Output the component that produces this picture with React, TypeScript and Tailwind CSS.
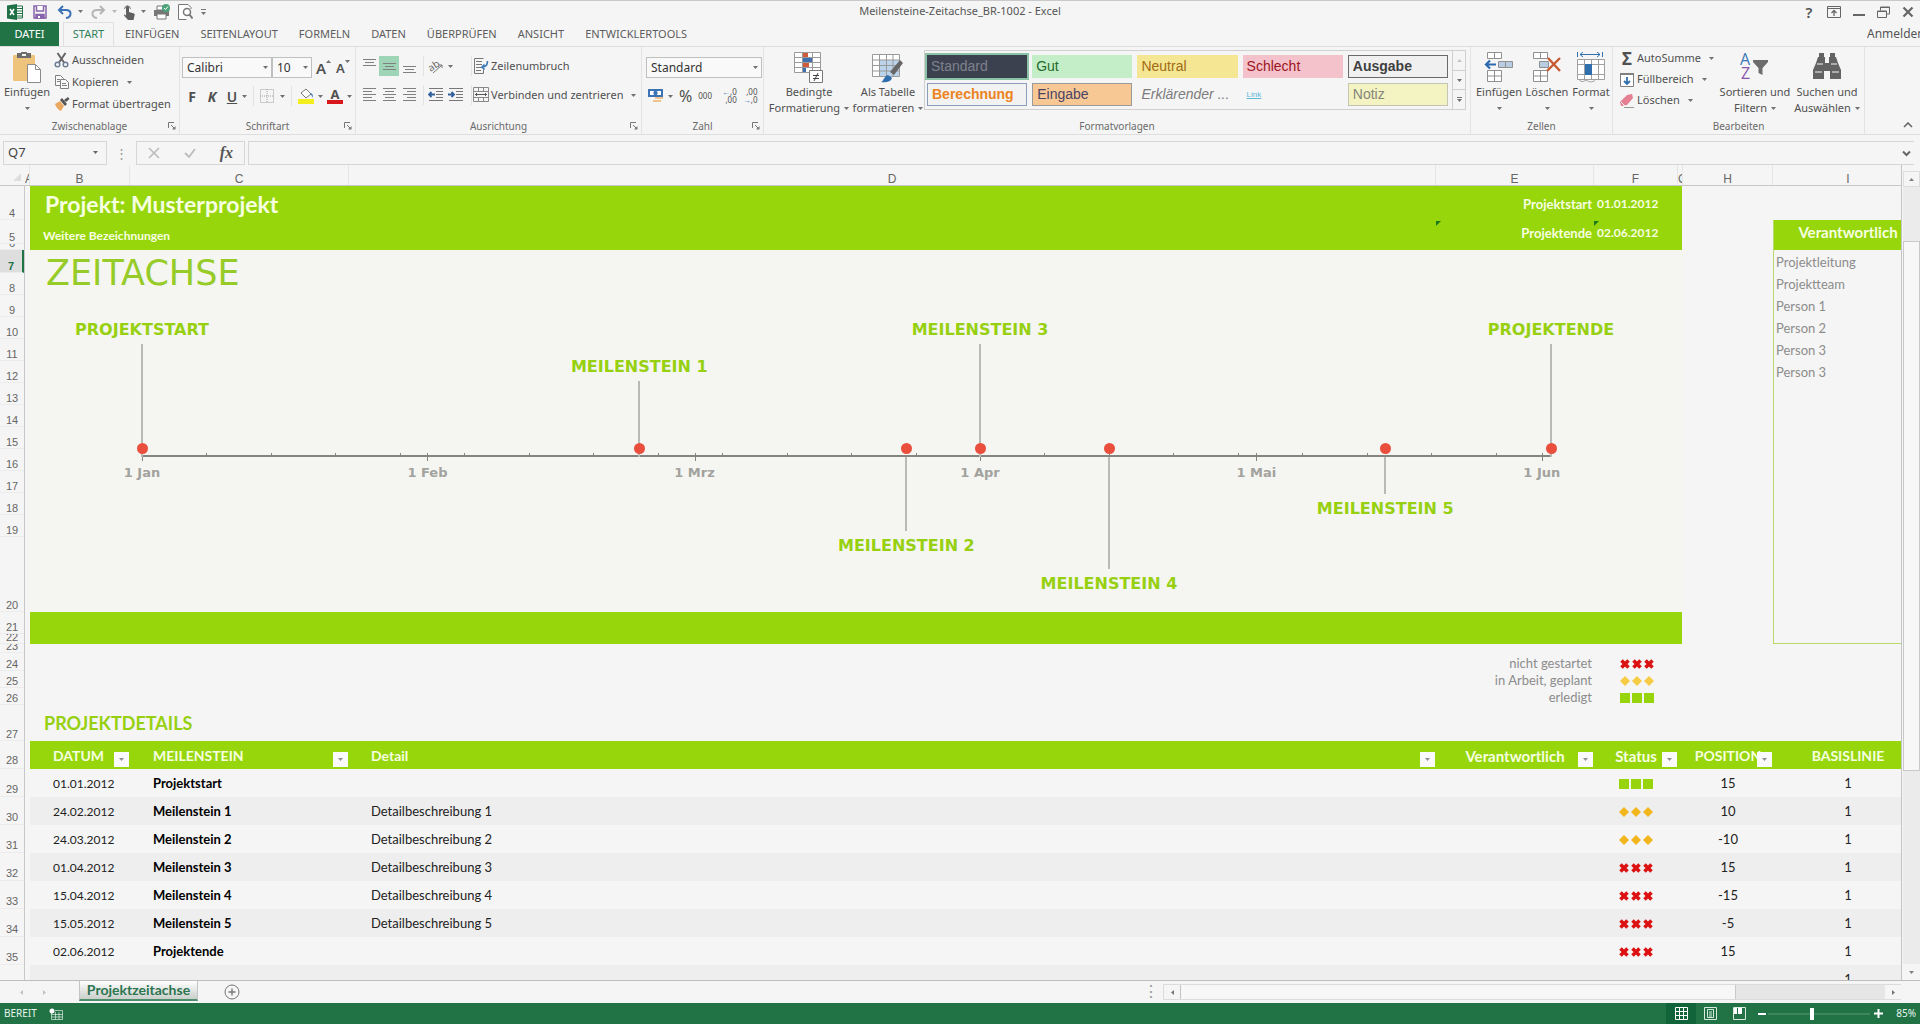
import React from "react";
import clsx from "clsx";

const rowHeaders = [
  { n: 4, h: "h-[34px]" },
  { n: 5, h: "h-6" },
  { n: 6, h: "h-1.5" },
  { n: 7, h: "h-[23px]" },
  { n: 8, h: "h-[22px]" },
  { n: 9, h: "h-[22px]" },
  { n: 10, h: "h-[22px]" },
  { n: 11, h: "h-[22px]" },
  { n: 12, h: "h-[22px]" },
  { n: 13, h: "h-[22px]" },
  { n: 14, h: "h-[22px]" },
  { n: 15, h: "h-[22px]" },
  { n: 16, h: "h-[22px]" },
  { n: 17, h: "h-[22px]" },
  { n: 18, h: "h-[22px]" },
  { n: 19, h: "h-[22px]" },
  { n: 20, h: "h-[75px]" },
  { n: 21, h: "h-[22px]" },
  { n: 22, h: "h-2.5" },
  { n: 23, h: "h-[9px]" },
  { n: 24, h: "h-[18px]" },
  { n: 25, h: "h-[17px]" },
  { n: 26, h: "h-[17px]" },
  { n: 27, h: "h-9" },
  { n: 28, h: "h-7 pb-0.5" },
  { n: 29, h: "h-7 pb-px" },
  { n: 30, h: "h-7 pb-px" },
  { n: 31, h: "h-7 pb-px" },
  { n: 32, h: "h-7 pb-px" },
  { n: 33, h: "h-7 pb-px" },
  { n: 34, h: "h-7 pb-px" },
  { n: 35, h: "h-7 pb-px" },
];

type Status = "done" | "active" | "open";

const milestones: { date: string; name: string; detail: string; status: Status; position: number }[] = [
  { date: "01.01.2012", name: "Projektstart", detail: "", status: "done", position: 15 },
  { date: "24.02.2012", name: "Meilenstein 1", detail: "Detailbeschreibung 1", status: "active", position: 10 },
  { date: "24.03.2012", name: "Meilenstein 2", detail: "Detailbeschreibung 2", status: "active", position: -10 },
  { date: "01.04.2012", name: "Meilenstein 3", detail: "Detailbeschreibung 3", status: "open", position: 15 },
  { date: "15.04.2012", name: "Meilenstein 4", detail: "Detailbeschreibung 4", status: "open", position: -15 },
  { date: "15.05.2012", name: "Meilenstein 5", detail: "Detailbeschreibung 5", status: "open", position: -5 },
  { date: "02.06.2012", name: "Projektende", detail: "", status: "open", position: 15 },
];

const months = [
  { label: "1 Jan", day: 0 },
  { label: "1 Feb", day: 31 },
  { label: "1 Mrz", day: 60 },
  { label: "1 Apr", day: 91 },
  { label: "1 Mai", day: 121 },
  { label: "1 Jun", day: 152 },
];

const TOTAL_DAYS = 153;
const percent = (day: number) => `${(day / TOTAL_DAYS) * 100}%`;

const dayOf = (date: string) => {
  const [d, m, y] = date.split(".").map(Number);
  return Math.round((Date.UTC(y, m - 1, d) - Date.UTC(2012, 0, 1)) / 86400000);
};

const people = ["Projektleitung", "Projektteam", "Person 1", "Person 2", "Person 3", "Person 3"];

/* ---------- small parts ---------- */

const Caret = ({ className }: { className?: string }) => (
  <svg viewBox="0 0 5 3" className={clsx("w-[5px] h-[3px] shrink-0 opacity-80", className)} fill="currentColor">
    <path d="M0 0h5L2.5 3z" />
  </svg>
);

const Sep = () => <span className="w-px h-5 bg-[#e2e2e2]" />;

const Launcher = () => (
  <button type="button" aria-label="Dialogfeld öffnen" className="absolute right-[3px] bottom-1">
    <svg viewBox="0 0 8 8" className="w-2 h-2" fill="none" stroke="#777">
      <path d="M.5 6V.5H6M3 3l3 3" />
      <path d="M7.5 4v3.5H4z" fill="#777" stroke="none" />
    </svg>
  </button>
);

interface GroupProps {
  label: string;
  className: string;
  launcher?: boolean;
  children: React.ReactNode;
}

const Group = ({ label, className, launcher, children }: GroupProps) => (
  <section className={clsx("relative flex flex-col border-r border-[#e3e3e3] shrink-0", className)}>
    <div className="h-[71px] flex">{children}</div>
    <div className="text-center text-[10px] leading-4 text-[#6a6a6a]">{label}</div>
    {launcher && <Launcher />}
  </section>
);

interface BigButtonProps {
  icon: React.ReactNode;
  line1: string;
  line2?: string;
  className: string;
}

const BigButton = ({ icon, line1, line2, className }: BigButtonProps) => (
  <button type="button" className={clsx("flex flex-col items-center pt-[5px] leading-4 whitespace-nowrap shrink-0", className)}>
    <span className="h-8">{icon}</span>
    <span>{line1}</span>
    <span className="h-4 flex items-center gap-1">
      {line2}
      <Caret />
    </span>
  </button>
);

const SmallButton = ({ icon, label, caret }: { icon: React.ReactNode; label: string; caret?: boolean }) => (
  <button type="button" className="flex items-center gap-0.5 whitespace-nowrap">
    <span className="w-4 h-4 shrink-0">{icon}</span>
    <span>{label}</span>
    {caret && <Caret className="ml-1.5" />}
  </button>
);

const Combo = ({ label, value, className }: { label: string; value: string; className: string }) => (
  <label className={clsx("relative block h-[21px]", className)}>
    <span className="sr-only">{label}</span>
    <select className="appearance-none w-full h-full border border-[#c0c0c0] bg-[#f9f9f9] pl-1 text-[12px] leading-4 text-[#333]">
      <option>{value}</option>
    </select>
    <Caret className="absolute right-1 top-[9px]" />
  </label>
);

const lineSets = {
  top: [[1, 14, 1], [3, 12, 4], [1, 14, 7]],
  middle: [[1, 14, 5], [3, 12, 8], [1, 14, 11]],
  bottom: [[1, 14, 8], [3, 12, 11], [1, 14, 14]],
  left: [[1, 14, 1], [1, 10, 4], [1, 14, 7], [1, 10, 10], [1, 14, 13]],
  center: [[1, 14, 1], [3, 12, 4], [1, 14, 7], [3, 12, 10], [1, 14, 13]],
  right: [[1, 14, 1], [5, 14, 4], [1, 14, 7], [5, 14, 10], [1, 14, 13]],
};

const AlignButton = ({ kind, label, active }: { kind: keyof typeof lineSets; label: string; active?: boolean }) => (
  <button type="button" aria-label={label} className={clsx("w-5 h-5 flex items-center justify-center", active && "bg-[#9fd5b7]")}>
    <svg viewBox="0 0 15 15" className="w-[15px] h-[15px]" stroke="#808080">
      {lineSets[kind].map(([a, b, y]) => (
        <path key={y} d={`M${a} ${y - 0.5}H${b}`} />
      ))}
    </svg>
  </button>
);

const StatusMark = ({ status, pale }: { status: Status; pale?: boolean }) => (
  <svg viewBox="0 0 34 10" className="w-[34px] h-2.5 mx-auto" aria-label={status}>
    {[0, 12, 24].map((x) => {
      if (status === "done") return <rect key={x} x={x} y="0" width="10" height="10" fill="#97d40c" />;
      if (status === "active")
        return <path key={x} d={`M${x + 5} 0l5 5-5 5-5-5z`} fill={pale ? "#f6cc45" : "#f2b51c"} />;
      return <path key={x} d={`M${x + 1.5} 1.500l7 7M${x + 8.5} 1.500l-7 7`} stroke="#dc1212" strokeWidth="3.600" />;
    })}
  </svg>
);

/* ---------- ribbon icons ---------- */

const PasteIcon = () => (
  <svg viewBox="0 0 28 32" className="w-7 h-8">
    <rect x="0" y="3" width="22" height="26" rx="1" fill="#eec37c" />
    <path d="M4 1h4a3 3 0 016 0h4v5H4z" fill="#6d6d6d" />
    <path d="M9 2h4v2H9z" fill="#f5f5f5" />
    <path d="M14.500 12.500h8l5 5v13h-13z" fill="#fff" stroke="#8a8a8a" />
    <path d="M22.500 12.500v5h5" fill="none" stroke="#8a8a8a" />
  </svg>
);

const CutIcon = () => (
  <svg viewBox="0 0 16 16" className="w-4 h-4" fill="none" stroke="#666" strokeWidth="1.5">
    <path d="M3.500 1l6.500 9.500M11.500 1L5 10.500" strokeWidth="2" />
    <circle cx="3.500" cy="12.500" r="2.300" stroke="#6c7f96" />
    <circle cx="11.500" cy="12.500" r="2.300" stroke="#6c7f96" />
  </svg>
);

const CopyIcon = () => (
  <svg viewBox="0 0 16 16" className="w-4 h-4" fill="#fafafa" stroke="#808080">
    <path d="M1.500 1.500h5l3 3v7h-8z" />
    <path d="M3 5.500h3M3 7.500h3" />
    <path d="M6.500 5.500h5l3 3v6h-8z" />
    <path d="M8 9.500h4M8 11.500h5" />
  </svg>
);

const BrushIcon = () => (
  <svg viewBox="0 0 16 16" className="w-4 h-4">
    <path d="M1 8l5-3 4 5-3 5c-3-1-5-4-6-7z" fill="#eba860" />
    <path d="M6 4l5 6 2-2-5-6z" fill="#555" />
    <path d="M10 4l4-3 1.500 2L12 6z" fill="#555" />
  </svg>
);

const RotateIcon = () => (
  <svg viewBox="0 0 16 16" className="w-4 h-4">
    <text x="0" y="11" fontSize="10" fill="#666" transform="rotate(-35 6 8)">ab</text>
    <path d="M5 15l9-8M14 7h-3M14 7v3" stroke="#777" fill="none" />
  </svg>
);

const WrapIcon = () => (
  <svg viewBox="0 0 16 16" className="w-4 h-4" fill="none">
    <path d="M1.500.5h9M1.500.5v15h9v-4M3 3.500h6M3 6.500h6M3 9.500h6M3 12.500h5" stroke="#777" />
    <path d="M14.500 3c0 4-2 6-5 6M11.500 6.500L9 9l2.500 2.500" stroke="#3b7ab8" strokeWidth="1.6" />
  </svg>
);

const MergeIcon = () => (
  <svg viewBox="0 0 16 16" className="w-4 h-4" fill="none" stroke="#888">
    <path d="M.5.5h15v14H.5zM.5 4.500h15M.5 10.500h15M5.500.5v4M10.500.5v4M5.500 10.500v4M10.500 10.500v4" />
    <path d="M2 7.500h12M4 6L2.500 7.500 4 9M12 6l1.500 1.500L12 9" stroke="#555" />
  </svg>
);

const IndentIcon = ({ right }: { right?: boolean }) => (
  <svg viewBox="0 0 16 16" className="w-4 h-4" fill="none" stroke="#777">
    <path d="M1 1.500h14M8 4.500h7M8 7.500h7M8 10.500h7M1 13.500h14" />
    <path d={right ? "M0 7.500h6M3.500 5L6 7.500 3.500 10" : "M1 7.500h6M3.500 5L1 7.500 3.500 10"} stroke="#31619c" strokeWidth="1.8" />
  </svg>
);

const CurrencyIcon = () => (
  <svg viewBox="0 0 16 16" className="w-4 h-4">
    <rect x="0" y="1" width="15" height="8" fill="#3b73b4" />
    <path d="M2 3h11v4H2z" fill="#fff" />
    <circle cx="7.500" cy="5" r="2.200" fill="#3b73b4" />
    <path d="M7 9h8v2H7zM5 12h8v2H5z" fill="#f0c38c" />
  </svg>
);

const CondIcon = () => (
  <svg viewBox="0 0 30 32" className="w-[30px] h-8">
    <path d="M.5.5h26v20H.5zM.5 5.500h26M.5 10.500h26M.5 15.500h26M8.500.5v20M18.500.5v20" fill="#fff" stroke="#9a9a9a" />
    <path d="M9 1h5v4H9zM9 11h6v4H9z" fill="#cf5b3d" />
    <path d="M9 6h9v4H9zM9 16h3v4H9z" fill="#3f6fae" />
    <path d="M15.500 18.500h13v12h-13z" fill="#fff" stroke="#777" />
    <path d="M19 23.500h6M19 26.500h6M24 21l-4 8" stroke="#444" />
  </svg>
);

const TableFormatIcon = () => (
  <svg viewBox="0 0 32 32" className="w-8 h-8">
    <path d="M.5 2.500h27v22H.5z" fill="#fff" />
    <path d="M8 8h19v16H8z" fill="#bcd3ec" />
    <path d="M.5 2.500h27v22H.5zM.5 8h27M.5 13.500h27M.5 19h27M7.500 2.500v22M14.500 2.500v22M21 2.500v22" fill="none" stroke="#999" />
    <path d="M28 8l3 3-9 12-4-3z" fill="#666" />
    <path d="M9 30c3-1 3-6 7-7l4 3c-1 4-7 5-11 4z" fill="#2f6fae" />
  </svg>
);

const CellsInsertIcon = () => (
  <svg viewBox="0 0 30 32" className="w-[30px] h-8" fill="#fff" stroke="#909090">
    <path d="M3.500.5h14v6h-14zM10.500.5v6M3.500 18.500h14v11h-14zM10.500 18.500v11M3.500 24h14" />
    <path d="M14.500 9.500h14v6h-14zM21.500 9.500v6" fill="#b9cde2" />
    <path d="M12 12.500H2M6 8.500l-4 4 4 4" fill="none" stroke="#2b6cb0" strokeWidth="2.200" />
  </svg>
);

const CellsDeleteIcon = () => (
  <svg viewBox="0 0 30 32" className="w-[30px] h-8" fill="#fff" stroke="#909090">
    <path d="M1.500.5h14v6h-14zM8.500.5v6M1.500 18.500h14v11h-14zM8.500 18.500v11M1.500 24h14" />
    <path d="M7.500 9.500h9v6h-9z" fill="#b9cde2" />
    <path d="M16 6l12 13M28 6L15 19" fill="none" stroke="#c75a33" strokeWidth="2.400" />
  </svg>
);

const CellsFormatIcon = () => (
  <svg viewBox="0 0 30 32" className="w-[30px] h-8" fill="#fff" stroke="#a0a0a0">
    <path d="M1.500 7.500h27v20h-27zM1.500 12.500h27M1.500 22.500h27M8.500 7.500v20M15.500 7.500v20M22.500 7.500v20" />
    <path d="M9 12h7v11H9z" fill="#2f6fae" stroke="none" />
    <path d="M4 2.500h20M7 0L4 2.500 7 5M21 0l3 2.500L21 5M1.500 0v5M26.500 0v5" fill="none" stroke="#2f6fae" />
    <path d="M3 27.500c3 4 5 1 7 1s4 3 9 0" fill="none" />
  </svg>
);

const SortIcon = () => (
  <svg viewBox="0 0 30 32" className="w-[30px] h-8">
    <text x="0" y="13" fontSize="16" fill="#3c78b4" className="font-['Open_Sans',sans-serif]">A</text>
    <text x="1" y="27" fontSize="16" fill="#8d55ad" className="font-['Open_Sans',sans-serif]">Z</text>
    <path d="M13 8h15v2l-5.500 6v7l-4-2v-5L13 10z" fill="#6d6d6d" />
  </svg>
);

const BinocularsIcon = () => (
  <svg viewBox="0 0 28 32" className="w-7 h-8" fill="#636363">
    <path d="M6 1h5v4h1v6h4V5h1V1h5v4h1l2 6 3 7v9H17v-8h-6v8H0v-9l3-7 2-6h1z" />
    <path d="M4 12h6M18 12h6M2 20h7M19 20h7" stroke="#f5f5f5" fill="none" />
  </svg>
);

const FillIcon = () => (
  <svg viewBox="0 0 16 16" className="w-4 h-4" fill="none">
    <path d="M1.500 2.500h13v12h-13z" fill="#fff" stroke="#808080" />
    <path d="M1 2h14" stroke="#808080" strokeWidth="2" />
    <path d="M8 5v7M5 9l3 3 3-3" stroke="#2f6fae" strokeWidth="1.800" />
  </svg>
);

const EraserIcon = () => (
  <svg viewBox="0 0 16 16" className="w-4 h-4">
    <path d="M8 2l5-1 1 4-6 7-6 1-1-4z" fill="#e57f92" />
    <path d="M2 9l4 4" stroke="#f5f5f5" />
    <path d="M5 14.500h10" stroke="#999" />
  </svg>
);

/* ---------- window chrome ---------- */

const TitleBar = () => (
  <header className="grid grid-cols-[1fr_auto_1fr] items-center h-[21px] text-[#555]">
    <div className="flex items-center pl-[7px]">
      <svg viewBox="0 0 16 16" className="w-4 h-4" aria-label="Excel">
        <path d="M8 2h7.500v12H8z" fill="#fff" stroke="#217346" />
        <path d="M9 4.500h6M9 7h6M9 9.500h6M9 12h6" stroke="#217346" />
        <path d="M0 1.500L10 0v16L0 14.500z" fill="#1f7145" />
        <path d="M3 5l4 6M7 5l-4 6" stroke="#fff" strokeWidth="1.500" />
      </svg>
      <button type="button" aria-label="Speichern" className="ml-2.5">
        <svg viewBox="0 0 14 14" className="w-3.5 h-3.5" fill="none" stroke="#8764ab" strokeWidth="1.500">
          <path d="M1 1h12v12H1z" />
          <path d="M3.500 1v5h7V1" fill="#fff" />
          <path d="M3 9.500h8V13H3z" fill="#8764ab" />
          <path d="M5 11h2v2H5z" fill="#fff" stroke="none" />
        </svg>
      </button>
      <button type="button" aria-label="Rückgängig" className="ml-2.5 flex items-center gap-1.5">
        <svg viewBox="0 0 15 14" className="w-[15px] h-3.5" fill="none" stroke="#3a72b4" strokeWidth="2">
          <path d="M6 1L2 5l4 4M2 5h7c6 0 6 7 0 8" />
        </svg>
        <Caret />
      </button>
      <button type="button" aria-label="Wiederholen" className="ml-2 flex items-center gap-1.5 text-[#aaa]">
        <svg viewBox="0 0 15 14" className="w-[15px] h-3.5" fill="none" stroke="#b5b5b5" strokeWidth="2">
          <path d="M9 1l4 4-4 4M13 5H6C0 5 0 12 6 13" />
        </svg>
        <Caret />
      </button>
      <button type="button" aria-label="Touchmodus" className="ml-1.5 flex items-center gap-1.5">
        <svg viewBox="0 0 12 16" className="w-3 h-4" fill="#606060">
          <path d="M3 3a1.500 1.500 0 013 0v5l5 1.500c1 .5 1 1 .5 2L10.500 16H5L1 11.500c-.5-1 .5-1.500 1.500-.5L3 12z" />
          <path d="M1.500 5a3 3 0 116 0" fill="none" stroke="#777" />
        </svg>
        <Caret />
      </button>
      <button type="button" aria-label="Schnelldruck" className="ml-2">
        <svg viewBox="0 0 16 16" className="w-4 h-4">
          <path d="M0 6h15v6H0z" fill="#777" />
          <path d="M3 10h9v5H3z" fill="#fff" stroke="#777" />
          <path d="M3 2h6v4H3z" fill="#fff" stroke="#777" />
          <circle cx="12" cy="4" r="4" fill="#4da37b" />
          <path d="M10 4l1.500 1.500L14 2.500" fill="none" stroke="#fff" />
        </svg>
      </button>
      <button type="button" aria-label="Seitenansicht" className="ml-2">
        <svg viewBox="0 0 15 16" className="w-[15px] h-4" fill="none" stroke="#777">
          <path d="M13 5V3.500L10 .5H.5v15h8" fill="#fff" />
          <circle cx="9" cy="8" r="3.500" strokeWidth="1.500" />
          <path d="M11.500 10.500l3 4" strokeWidth="2" />
        </svg>
      </button>
      <button type="button" aria-label="Symbolleiste anpassen" className="ml-2 flex flex-col items-center gap-0.5">
        <span className="w-[5px] h-px bg-[#777]" />
        <Caret />
      </button>
    </div>
    <h1 className="text-[11px]">Meilensteine-Zeitachse_BR-1002 - Excel</h1>
    <div className="flex items-center justify-end gap-3 pr-1.5">
      <button type="button" aria-label="Hilfe" className="w-3 text-[15px] leading-5 font-semibold">?</button>
      <button type="button" aria-label="Menüband-Anzeigeoptionen">
        <svg viewBox="0 0 14 12" className="w-3.5 h-3" fill="none" stroke="#666">
          <path d="M.5.5h13v11H.5zM.5 2.500h13" />
          <path d="M7 10V5M4.500 7L7 4.500 9.500 7" strokeWidth="1.300" />
        </svg>
      </button>
      <button type="button" aria-label="Minimieren" className="w-3 h-0.5 mt-1.5 bg-[#666]" />
      <button type="button" aria-label="Verkleinern">
        <svg viewBox="0 0 13 12" className="w-[13px] h-3" fill="none" stroke="#666">
          <path d="M.5 5h9v6.500h-9zM.5 5.500h9M3.500 4.500V1h9v7H10M3.500 1.500h9" />
        </svg>
      </button>
      <button type="button" aria-label="Schließen">
        <svg viewBox="0 0 12 12" className="w-3 h-3" stroke="#666" strokeWidth="2.200">
          <path d="M1.500 1.500l9 9M10.500 1.500l-9 9" />
        </svg>
      </button>
    </div>
  </header>
);

const tabs = ["EINFÜGEN", "SEITENLAYOUT", "FORMELN", "DATEN", "ÜBERPRÜFEN", "ANSICHT", "ENTWICKLERTOOLS"];

const TabStrip = () => (
  <nav className="flex gap-px h-6 items-stretch text-[11px] text-[#5c5c5c]">
    <button type="button" className="w-[59px] bg-[#217346] text-white">DATEI</button>
    <button type="button" className="ml-[3px] w-[51px] border border-b-0 border-[#e0e0e0] text-[#2f8259]">START</button>
    {tabs.map((t) => (
      <button type="button" key={t} className="px-2.5">{t}</button>
    ))}
    <a href="#" className="ml-auto w-[53px] overflow-hidden flex items-center text-[12px] text-[#555]">Anmelden</a>
  </nav>
);

const cellStyles = [
  { name: "Standard", cls: "bg-[#3c4150] text-[#7e828c] outline-2 outline-[#8cc3a7]" },
  { name: "Gut", cls: "bg-[#c4eec8] text-[#1f6b2a]" },
  { name: "Neutral", cls: "bg-[#f5e693] text-[#a06b14]" },
  { name: "Schlecht", cls: "bg-[#f3c2ca] text-[#9d1422]" },
  { name: "Ausgabe", cls: "bg-[#f0f0f0] text-[#3f3f3f] font-bold border border-[#6a6a6a]" },
  { name: "Berechnung", cls: "bg-[#f2f2f2] text-[#ec8320] font-bold border border-[#8b9dba]" },
  { name: "Eingabe", cls: "bg-[#f7c894] text-[#4b4465] border border-[#9a9a9a]" },
  { name: "Erklärender ...", cls: "text-[#7c7c7c] italic" },
  { name: "Link", cls: "text-[#5cb8d8] underline text-[8px]" },
  { name: "Notiz", cls: "bg-[#f3f4c2] text-[#85857a] border border-[#c4c4b4]" },
];

const Ribbon = () => (
  <div className="flex h-[89px] border-y border-[#dedede] text-[11px] text-[#505050]">
    <Group label="Zwischenablage" className="w-[180px]" launcher>
      <BigButton icon={<PasteIcon />} line1="Einfügen" className="w-[54px]" />
      <div className="flex flex-col pt-0.5">
        <div className="h-[22px] flex"><SmallButton icon={<CutIcon />} label="Ausschneiden" /></div>
        <div className="h-[22px] flex"><SmallButton icon={<CopyIcon />} label="Kopieren" caret /></div>
        <div className="h-[22px] flex"><SmallButton icon={<BrushIcon />} label="Format übertragen" /></div>
      </div>
    </Group>

    <Group label="Schriftart" className="w-44" launcher>
      <div className="flex flex-col gap-2 pt-2.5 pl-0.5">
        <div className="flex items-center h-[21px]">
          <Combo label="Schriftart" value="Calibri" className="w-[90px]" />
          <Combo label="Schriftgrad" value="10" className="w-10" />
          <button type="button" aria-label="Schriftgrad vergrößern" className="ml-1 w-5 flex items-start text-[15px] leading-4 font-semibold">
            A<Caret className="rotate-180" />
          </button>
          <button type="button" aria-label="Schriftgrad verkleinern" className="w-4 flex items-start text-[13px] leading-4 font-semibold">
            A<Caret />
          </button>
        </div>
        <div className="flex items-center h-5 text-[14px]">
          <button type="button" className="w-5 font-bold">F</button>
          <button type="button" className="w-5 font-bold italic">K</button>
          <button type="button" className="w-5 font-semibold underline">U</button>
          <Caret className="mr-1.5" />
          <Sep />
          <button type="button" aria-label="Rahmen" className="flex items-center gap-1.5 mx-1.5">
            <svg viewBox="0 0 14 14" className="w-3.5 h-3.5" fill="none" stroke="#a0a0a0" strokeDasharray="1 1">
              <path d="M.5.5h13v13H.5zM7 0v14M0 7h14" />
            </svg>
            <Caret />
          </button>
          <Sep />
          <button type="button" aria-label="Füllfarbe" className="flex items-center gap-1 ml-1.5">
            <svg viewBox="0 0 16 16" className="w-4 h-4">
              <path d="M3 5l5-4 5 5-5 4z" fill="#fff" stroke="#777" />
              <path d="M12 5c3 0 3 3 3 5-1-1-1-3-3-4z" fill="#4a7cb8" />
              <path d="M0 11h16v5H0z" fill="#f3ee1e" />
            </svg>
            <Caret />
          </button>
          <button type="button" aria-label="Schriftfarbe" className="flex items-center gap-1 ml-1">
            <span className="w-4 h-4 border-b-4 border-[#d8161c] text-[13px] leading-3 font-bold">A</span>
            <Caret />
          </button>
        </div>
      </div>
    </Group>

    <Group label="Ausrichtung" className="w-[286px]" launcher>
      <div className="flex flex-col gap-2 pt-[9px] pl-[3px]">
        <div className="flex items-center h-5">
          <AlignButton kind="top" label="Oben ausrichten" />
          <AlignButton kind="middle" label="Zentriert ausrichten" active />
          <AlignButton kind="bottom" label="Unten ausrichten" />
          <span className="w-1" />
          <Sep />
          <button type="button" aria-label="Ausrichtung" className="flex items-center gap-1 ml-1 mr-[18px]">
            <RotateIcon />
            <Caret />
          </button>
          <Sep />
          <span className="w-px" />
          <SmallButton icon={<WrapIcon />} label="Zeilenumbruch" />
        </div>
        <div className="flex items-center h-5 mt-px">
          <AlignButton kind="left" label="Linksbündig" />
          <AlignButton kind="center" label="Zentriert" />
          <AlignButton kind="right" label="Rechtsbündig" />
          <span className="w-1" />
          <Sep />
          <button type="button" aria-label="Einzug verkleinern" className="ml-1"><IndentIcon /></button>
          <button type="button" aria-label="Einzug vergrößern" className="ml-1 mr-[7px]"><IndentIcon right /></button>
          <Sep />
          <span className="w-px" />
          <SmallButton icon={<MergeIcon />} label="Verbinden und zentrieren" caret />
        </div>
      </div>
    </Group>

    <Group label="Zahl" className="w-[122px]" launcher>
      <div className="flex flex-col gap-2 pt-2.5 pl-1">
        <Combo label="Zahlenformat" value="Standard" className="w-[116px]" />
        <div className="flex items-center h-5">
          <button type="button" aria-label="Buchhaltungszahlenformat" className="flex items-center gap-1 ml-0.5">
            <CurrencyIcon />
            <Caret />
          </button>
          <button type="button" className="ml-1.5 text-[16px]">%</button>
          <button type="button" className="ml-1.5 text-[8px]">000</button>
          <button type="button" aria-label="Dezimalstelle hinzufügen" className="ml-2.5 text-[8px] leading-2 text-right">
            <span className="text-[#2f6fae]">←</span>,0<br />,00
          </button>
          <button type="button" aria-label="Dezimalstelle löschen" className="ml-1.5 text-[8px] leading-2 text-right">
            ,00<br /><span className="text-[#2f6fae]">→</span>,0
          </button>
        </div>
      </div>
    </Group>

    <Group label="Formatvorlagen" className="flex-1">
      <BigButton icon={<CondIcon />} line1="Bedingte" line2="Formatierung" className="w-[90px]" />
      <BigButton icon={<TableFormatIcon />} line1="Als Tabelle" line2="formatieren" className="w-[68px]" />
      <div className="flex-1 flex mt-[3px] ml-0.5 mr-1 h-[60px] border border-[#d0d0d0]">
        <div className="flex-1 grid grid-cols-5 gap-[5px] py-1 px-0.5 font-['Liberation_Sans',Arial,sans-serif] text-[14px]">
          {cellStyles.map((s) => (
            <button type="button" key={s.name} className={clsx("h-[23px] px-1 text-left whitespace-nowrap", s.cls)}>
              {s.name}
            </button>
          ))}
        </div>
        <div className="w-[13px] ml-0.5 flex flex-col border-l border-[#d0d0d0] divide-y divide-[#d0d0d0]">
          <button type="button" aria-label="Nach oben" className="flex-1 flex items-center justify-center text-[#bbb]"><Caret className="rotate-180" /></button>
          <button type="button" aria-label="Nach unten" className="flex-1 flex items-center justify-center"><Caret /></button>
          <button type="button" aria-label="Mehr" className="flex-1 flex flex-col gap-px items-center justify-center">
            <span className="w-[5px] h-px bg-[#777]" />
            <Caret />
          </button>
        </div>
      </div>
    </Group>

    <Group label="Zellen" className="w-[142px]">
      <BigButton icon={<CellsInsertIcon />} line1="Einfügen" className="w-[50px] ml-[3px]" />
      <BigButton icon={<CellsDeleteIcon />} line1="Löschen" className="w-[46px]" />
      <BigButton icon={<CellsFormatIcon />} line1="Format" className="w-[42px]" />
    </Group>

    <Group label="Bearbeiten" className="w-[252px]">
      <div className="flex flex-col pt-px pl-1.5 w-[105px]">
        <div className="h-[21px] flex"><SmallButton icon={<span className="block text-[17px] leading-4 font-bold">Σ</span>} label="AutoSumme" caret /></div>
        <div className="h-[21px] flex"><SmallButton icon={<FillIcon />} label="Füllbereich" caret /></div>
        <div className="h-[21px] flex"><SmallButton icon={<EraserIcon />} label="Löschen" caret /></div>
      </div>
      <BigButton icon={<SortIcon />} line1="Sortieren und" line2="Filtern" className="w-[74px]" />
      <BigButton icon={<BinocularsIcon />} line1="Suchen und" line2="Auswählen" className="w-[70px]" />
    </Group>

    <div className="w-[55px] flex items-end justify-end pr-[7px] pb-1.5 shrink-0">
      <button type="button" aria-label="Menüband reduzieren">
        <svg viewBox="0 0 10 6" className="w-2.5 h-1.5" fill="none" stroke="#666" strokeWidth="1.600">
          <path d="M1 5l4-4 4 4" />
        </svg>
      </button>
    </div>
  </div>
);

const FormulaBar = () => (
  <div className="flex items-stretch h-[24px] mt-1.5 ml-[3px] mr-1.5 text-[13px] text-[#444]">
    <label className="relative w-[104px] border border-[#d6d6d6] flex">
      <span className="sr-only">Namenfeld</span>
      <input defaultValue="Q7" className="w-full pl-1 bg-transparent" />
      <Caret className="absolute right-2 top-[9px]" />
    </label>
    <span className="w-[29px] flex items-center justify-center text-[#999] leading-none">⋮</span>
    <div className="w-[109px] border border-[#d6d6d6] flex items-center justify-between px-[11px]">
      <button type="button" aria-label="Abbrechen">
        <svg viewBox="0 0 12 12" className="w-3 h-3" stroke="#bbb" strokeWidth="1.600"><path d="M1 1l10 10M11 1L1 11" /></svg>
      </button>
      <button type="button" aria-label="Eingeben">
        <svg viewBox="0 0 12 12" className="w-3 h-3" stroke="#bbb" strokeWidth="1.800" fill="none"><path d="M1 6l4 4 6-8" /></svg>
      </button>
      <button type="button" className="font-['Liberation_Serif',serif] italic text-[16px] leading-5 font-bold text-[#555]">fx</button>
    </div>
    <input aria-label="Bearbeitungsleiste" className="flex-1 ml-[3px] border border-r-0 border-[#d6d6d6] bg-transparent" />
    <button type="button" aria-label="Erweitern" className="w-4 border-y border-[#d6d6d6] flex items-center justify-center">
      <svg viewBox="0 0 9 7" className="w-[9px] h-[7px]" fill="none" stroke="#666" strokeWidth="2"><path d="M1 1.500l3.500 3.500L8 1.500" /></svg>
    </button>
  </div>
);

/* ---------- sheet ---------- */

const columnHeads = [
  { l: "A", w: "w-[5px]" },
  { l: "B", w: "w-[100px] justify-center" },
  { l: "C", w: "w-[219px] justify-center" },
  { l: "D", w: "flex-1 justify-center" },
  { l: "E", w: "w-[158px] justify-center" },
  { l: "F", w: "w-[84px] justify-center" },
  { l: "G", w: "w-[5px]" },
  { l: "H", w: "w-[90px] justify-center" },
];

const ColumnHeads = () => (
  <div className="flex h-[21px] border-b border-[#c8c8c8] font-['Liberation_Sans',Arial,sans-serif] text-[12px] leading-7 text-[#666]">
    <span className="w-[25px] flex items-end justify-end p-1">
      <svg viewBox="0 0 8 8" className="w-2 h-2" fill="#ddd"><path d="M8 0v8H0z" /></svg>
    </span>
    {columnHeads.map((c) => (
      <span key={c.l} className={clsx("flex overflow-hidden border-r border-[#e6e6e6]", c.w)}>{c.l}</span>
    ))}
    <span className="w-[128px] overflow-hidden"><span className="block w-[150px] text-center">I</span></span>
  </div>
);

const RowHeads = () => (
  <div className="w-[25px] shrink-0 border-r border-[#c8c8c8] font-['Liberation_Sans',Arial,sans-serif] text-[11px] leading-[11px] text-[#666]">
    {rowHeaders.map((r) => (
      <div
        key={r.n}
        className={clsx(
          "flex items-end justify-center overflow-hidden border-b border-[#ececec]",
          r.h,
          r.n === 7 && "bg-[#dedede] font-bold text-[#217346] border-r-2 border-r-[#217346]"
        )}
      >
        {r.n}
      </div>
    ))}
  </div>
);

const Timeline = () => (
  <div className="h-[362px] bg-[#f5f6f1] pt-1 pl-4">
    <h2 className="font-['DejaVu_Sans',Verdana,sans-serif] text-[35px] leading-[38px] text-[#97cc28]">ZEITACHSE</h2>
    {/* axis starts on 1 Jan and ends on the last milestone */}
    <div className="relative ml-24 mr-[131px] mt-[163px] border-t-2 border-[#85857f] font-['DejaVu_Sans',Verdana,sans-serif] font-bold">
      {Array.from({ length: 22 }, (_, i) => (
        <span key={i} className="absolute -top-1 w-px h-1 bg-[#85857f]" style={{ left: percent(i * 7) }} />
      ))}
      {months.map((m) => (
        <React.Fragment key={m.label}>
          <span className="absolute -top-1 w-px h-2 bg-[#85857f]" style={{ left: percent(m.day) }} />
          <span className="absolute top-2 -translate-x-1/2 whitespace-nowrap text-[13px] leading-4 text-[#a2a29e]" style={{ left: percent(m.day) }}>
            {m.label}
          </span>
        </React.Fragment>
      ))}
      {milestones.map((m) => {
        const up = m.position > 0;
        const stem = Math.abs(m.position) * 7.5 + (up ? 1 : -1);
        return (
          <div key={m.name} className="absolute w-0" style={{ left: percent(dayOf(m.date)) }}>
            <span
              className={clsx("absolute w-0.5 -left-px bg-[#b9b9b5]", up ? "bottom-0" : "top-0")}
              style={{ height: stem }}
            />
            <span
              className="absolute -translate-x-1/2 whitespace-nowrap text-[16px] leading-5 text-[#97d011] uppercase"
              style={up ? { bottom: stem + 4 } : { top: stem + 5 }}
            >
              {m.name}
            </span>
            <span className="absolute -left-[5px] -top-3.5 w-[11px] h-[11px] rounded-full bg-[#ea4f3d]" />
          </div>
        );
      })}
    </div>
  </div>
);

const ProjectHeader = () => (
  <div className="flex h-16 bg-[#98d60c] text-[#f6ffe0]">
    <div className="flex-1 pl-[13px]">
      <div className="pl-0.5 text-[23px] leading-9 font-bold">Projekt: Musterprojekt</div>
      <div className="mt-1.5 text-[12px] leading-4 font-bold">Weitere Bezeichnungen</div>
    </div>
    <div className="w-[246px] grid grid-cols-[158px_88px] auto-rows-[29px] pt-1 text-[12px] leading-7 font-bold">
      <span className="text-right pr-0.5 text-[13px]">Projektstart</span>
      <span className="pl-[3px]">01.01.2012</span>
      <span className="relative text-right pr-0.5 text-[13px]">
        <i className="absolute left-0 top-0.5 border-t-5 border-r-5 border-t-[#1c7a1c] border-r-transparent" />
        Projektende
      </span>
      <span className="relative pl-[3px]">
        <i className="absolute left-0 top-0.5 border-t-5 border-r-5 border-t-[#1c7a1c] border-r-transparent" />
        02.06.2012
      </span>
    </div>
  </div>
);

const legend: { text: string; status: Status }[] = [
  { text: "nicht gestartet", status: "open" },
  { text: "in Arbeit, geplant", status: "active" },
  { text: "erledigt", status: "done" },
];

const Legend = () => (
  <div className="pt-[11px] h-[61px] text-[13px] leading-[17px] text-[#8c8c8c]">
    {legend.map((l) => (
      <div key={l.text} className="flex items-center justify-end">
        <span>{l.text}</span>
        <span className="w-[84px] ml-[3px] mr-[3px]"><StatusMark status={l.status} pale /></span>
      </div>
    ))}
  </div>
);

const FilterButton = () => (
  <button type="button" aria-label="Filter" className="absolute right-px bottom-0.5 w-[15px] h-[15px] bg-[#fafafa] flex items-center justify-center text-[#777]">
    <Caret />
  </button>
);

const DetailsTable = () => (
  <table className="w-full table-fixed border-collapse text-[13px] text-[#222]">
    <colgroup>
      <col className="w-[100px]" />
      <col className="w-[219px]" />
      <col />
      <col className="w-[158px]" />
      <col className="w-[84px]" />
      <col className="w-[5px]" />
      <col className="w-[90px]" />
      <col className="w-[128px]" />
    </colgroup>
    <thead>
      <tr className="h-7 bg-[#98d60c] text-[#f6ffe0] text-[14px] leading-5">
        <th className="relative p-0 pt-0.5 pl-[23px] text-left">DATUM<FilterButton /></th>
        <th className="relative p-0 pt-0.5 pl-[23px] text-left">MEILENSTEIN<FilterButton /></th>
        <th className="relative p-0 pt-0.5 pl-[22px] text-left">Detail<FilterButton /></th>
        <th className="relative p-0 pt-0.5 text-[15px]">Verantwortlich<FilterButton /></th>
        <th className="relative p-0 pt-0.5 text-[15px]">Status<FilterButton /></th>
        <th className="p-0" />
        <th className="relative p-0 pt-0.5">POSITION<FilterButton /></th>
        <th className="p-0 pt-0.5"><div className="w-[150px]">BASISLINIE</div></th>
      </tr>
    </thead>
    <tbody>
      {milestones.map((m) => (
        <tr key={m.name} className="h-7 even:bg-[#eeeeee]">
          <td className="p-0 pt-0.5 pl-[23px] text-[12px]">{m.date}</td>
          <td className="p-0 pt-0.5 pl-[23px] font-bold text-black">{m.name}</td>
          <td className="p-0 pt-0.5 pl-[22px]">{m.detail}</td>
          <td className="p-0" />
          <td className="p-0 pt-0.5"><StatusMark status={m.status} /></td>
          <td className="p-0" />
          <td className="p-0 pt-0.5 text-center">{m.position}</td>
          <td className="p-0 pt-0.5"><div className="w-[150px] text-center">1</div></td>
        </tr>
      ))}
      <tr className="h-7 bg-[#eeeeee]">
        <td colSpan={7} className="p-0" />
        <td className="p-0 pt-0.5"><div className="w-[150px] text-center">1</div></td>
      </tr>
    </tbody>
  </table>
);

const Cells = () => (
  <main className="flex-1 min-w-0 overflow-hidden pl-[5px] font-[Lato,Calibri,sans-serif]">
    <div className="flex">
      <div className="flex-1 min-w-0">
        <ProjectHeader />
        <Timeline />
        <div className="h-8 bg-[#98d60c]" />
        <Legend />
      </div>
      <aside className="ml-[91px] w-[128px] overflow-hidden mt-[34px] h-[424px] border-l border-b border-[#b9d96a]">
        <div className="h-[30px] bg-[#98d60c] text-[#f6ffe0] overflow-hidden">
          <h3 className="w-[148px] text-center text-[15px] leading-6 font-bold">Verantwortlich</h3>
        </div>
        <ul className="pt-px pl-0.5 text-[13px] leading-[22px] text-[#8c8c8c]">
          {people.map((p, i) => (
            <li key={i}>{p}</li>
          ))}
        </ul>
      </aside>
    </div>
    <h2 className="h-9 pl-3.5 text-[18px] leading-9 font-bold text-[#97d011]">PROJEKTDETAILS</h2>
    <DetailsTable />
  </main>
);

const VerticalScroll = () => (
  <div className="w-[19px] shrink-0 flex flex-col border-l border-[#c4c4c4] pt-1.5 pl-px text-[#666]">
    <button type="button" aria-label="Nach oben blättern" className="h-4 border border-[#ddd] flex items-center justify-center"><Caret className="rotate-180" /></button>
    <div className="flex-1 flex flex-col bg-[#ebebeb]">
      <div className="h-[54px]" />
      <div className="h-[530px] bg-[#f7f7f7] border border-[#c8c8c8]" />
    </div>
    <button type="button" aria-label="Nach unten blättern" className="h-4 flex items-center justify-center"><Caret /></button>
  </div>
);

const SheetTabs = () => (
  <div className="flex h-[23px] border-t border-[#bdbdbd]">
    <div className="w-[79px] flex items-center pl-[19px] gap-[18px] text-[#b5b5b5]">
      <button type="button" aria-label="Vorheriges Blatt"><Caret className="rotate-90" /></button>
      <button type="button" aria-label="Nächstes Blatt"><Caret className="-rotate-90" /></button>
    </div>
    <button type="button" className="w-[119px] h-5 bg-linear-to-b from-white to-[#c9cfca] border-x border-b-2 border-x-[#c4c4c4] border-b-[#4d8f6d] font-[Lato,Calibri,sans-serif] font-bold text-[14px] leading-4 text-[#2c7350]">
      Projektzeitachse
    </button>
    <button type="button" aria-label="Neues Blatt" className="ml-[26px]">
      <svg viewBox="0 0 16 16" className="w-4 h-4" fill="none" stroke="#777">
        <circle cx="8" cy="8" r="7" />
        <path d="M4.500 8h7M8 4.500v7" strokeWidth="1.400" />
      </svg>
    </button>
    <span className="ml-auto w-6 text-center leading-5 text-[#999]">⋮</span>
    <div className="w-[738px] mr-[19px] my-[3px] flex border-y border-l border-[#dcdcdc] bg-[#e6e6e6] text-[#555]">
      <button type="button" aria-label="Nach links blättern" className="w-[17px] bg-[#f5f5f5] border-r border-[#c4c4c4] flex items-center justify-center"><Caret className="rotate-90" /></button>
      <div className="w-[555px] bg-[#f7f7f7] border-r border-[#c8c8c8]" />
      <button type="button" aria-label="Nach rechts blättern" className="ml-auto w-4 bg-[#f5f5f5] flex items-center justify-center"><Caret className="-rotate-90" /></button>
    </div>
  </div>
);

const StatusBar = () => (
  <footer className="flex items-center h-[21px] bg-[#217346] text-[#e9f5ee] text-[10px]">
    <span className="pl-1">BEREIT</span>
    <button type="button" aria-label="Makro aufzeichnen" className="ml-3">
      <svg viewBox="0 0 14 12" className="w-3.5 h-3" fill="none" stroke="#e0f0e6">
        <path d="M2.500 4v7.500h11v-9H6M2.500 6.500h11M6.500 4v7.500M10 4v7.500M2.500 9h11" opacity=".7" />
        <circle cx="3" cy="3" r="2.500" fill="#fff" stroke="none" />
      </svg>
    </button>
    <button type="button" aria-label="Normal" className="ml-auto w-[30px] h-full bg-[#11633a] flex items-center justify-center">
      <svg viewBox="0 0 13 13" className="w-[13px] h-[13px]" fill="none" stroke="#fff"><path d="M.5.5h12v12H.5zM4.500 0v13M8.500 0v13M0 4.500h13M0 8.500h13" /></svg>
    </button>
    <button type="button" aria-label="Seitenlayout" className="ml-2">
      <svg viewBox="0 0 13 13" className="w-[13px] h-[13px]" fill="none" stroke="#d5eadd"><path d="M.5.5h12v12H.5zM3.500 2.500h6v8h-6zM5 5h3M5 7h3M5 9h3" /></svg>
    </button>
    <button type="button" aria-label="Umbruchvorschau" className="ml-4">
      <svg viewBox="0 0 13 13" className="w-[13px] h-[13px]"><path d="M.5.5h12v12H.5z" fill="none" stroke="#d5eadd" /><path d="M1 1h3v6H1zM5 1h4v6H5z" fill="#fff" /></svg>
    </button>
    <button type="button" aria-label="Verkleinern" className="ml-3 w-2 h-0.5 bg-white" />
    <input
      type="range"
      aria-label="Zoom"
      min={10}
      max={200}
      defaultValue={92}
      className="mx-0.5 w-[102px] h-3 appearance-none bg-linear-to-b from-transparent from-45% via-[#c5dfd0] via-50% to-transparent to-55% [&::-webkit-slider-thumb]:appearance-none [&::-webkit-slider-thumb]:w-1 [&::-webkit-slider-thumb]:h-3 [&::-webkit-slider-thumb]:bg-white"
    />
    <button type="button" aria-label="Vergrößern" className="ml-0.5">
      <svg viewBox="0 0 9 9" className="w-[9px] h-[9px]" stroke="#fff" strokeWidth="2"><path d="M0 4.500h9M4.500 0v9" /></svg>
    </button>
    <span className="w-[37px] text-right pr-1">85%</span>
  </footer>
);

const App: React.FC = () => {
  return (
    <div className="h-screen flex flex-col overflow-hidden bg-[#f5f5f5] border-t border-[#c9c9c9] font-['Noto_Sans','Segoe_UI',sans-serif]">
      <TitleBar />
      <TabStrip />
      <Ribbon />
      <FormulaBar />
      <div className="flex-1 min-h-0 flex overflow-hidden">
        <div className="flex-1 min-w-0 flex flex-col">
          <ColumnHeads />
          <div className="flex-1 min-h-0 flex overflow-hidden">
            <RowHeads />
            <Cells />
          </div>
        </div>
        <VerticalScroll />
      </div>
      <SheetTabs />
      <StatusBar />
    </div>
  );
};

export default App;
